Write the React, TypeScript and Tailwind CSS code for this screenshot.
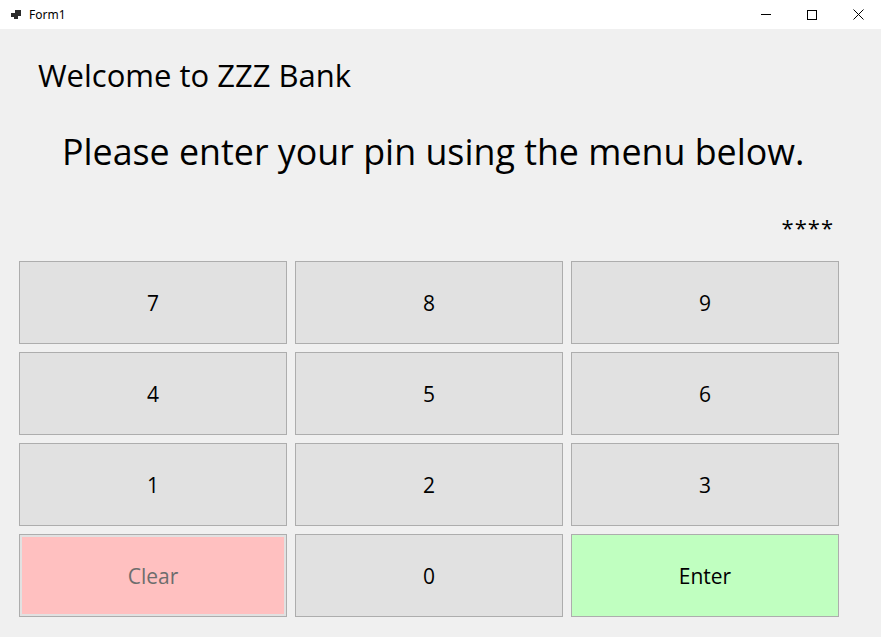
import React from "react";

const F = { fontFamily: '"Open Sans", "Noto Sans", sans-serif' };

function Btn({ label, kind }: { label: string; kind?: "clear" | "enter" }) {
  if (kind === "clear") {
    return (
      <div className="border border-[#adadad] bg-[#e1e1e1] p-[2px] flex">
        <div className="flex-1 bg-[#ffc0c0] flex items-center justify-center pt-[2px] text-[21px] text-[#6d6d6d]">
          {label}
        </div>
      </div>
    );
  }
  return (
    <div
      className={`border border-[#adadad] flex items-center justify-center pt-[2px] text-[21px] text-black ${
        kind === "enter" ? "bg-[#c0ffc0]" : "bg-[#e1e1e1]"
      }`}
    >
      {label}
    </div>
  );
}

export default function App() {
  return (
    <div className="w-[881px] h-[637px] overflow-hidden bg-[#f0f0f0]" style={F}>
      <div className="h-[29px] bg-white flex items-center">
        <svg className="ml-[10px]" width="12" height="12" viewBox="0 0 12 12">
          <rect x="5" y="1" width="6" height="6" fill="#2b2b2b" />
          <rect x="1" y="4" width="4" height="4" fill="#2b2b2b" />
          <rect x="4" y="6" width="4" height="4" fill="#2b2b2b" />
        </svg>
        <span className="ml-[7px] text-[12px] text-black" style={{ fontFamily: '"Noto Sans", sans-serif' }}>Form1</span>
        <div className="ml-auto flex h-full">
          <div className="w-[46px] flex items-center justify-center">
            <div className="w-[10px] h-px bg-black" />
          </div>
          <div className="w-[46px] flex items-center justify-center">
            <div className="w-[10px] h-[10px] border border-black" />
          </div>
          <div className="w-[46px] flex items-center justify-center">
            <svg width="11" height="11" viewBox="0 0 11 11">
              <path d="M0.5 0.5 L10.5 10.5 M10.5 0.5 L0.5 10.5" stroke="#000" strokeWidth="1" />
            </svg>
          </div>
        </div>
      </div>
      <div className="pt-[26px]">
        <div className="ml-[38px] text-[31px] leading-[40px] text-black">Welcome to ZZZ Bank</div>
        <div className="ml-[62px] mt-[32px] text-[35.8px] leading-[48px] text-black">
          Please enter your pin using the menu below.
        </div>
        <div className="mt-[37px] w-[834px] text-right text-[22px] leading-[30px] tracking-[1px] text-black">****</div>
        <div className="ml-[19px] mt-[19px] grid grid-cols-[268px_268px_268px] auto-rows-[83px] gap-x-[8px] gap-y-[8px]">
          <Btn label="7" />
          <Btn label="8" />
          <Btn label="9" />
          <Btn label="4" />
          <Btn label="5" />
          <Btn label="6" />
          <Btn label="1" />
          <Btn label="2" />
          <Btn label="3" />
          <Btn label="Clear" kind="clear" />
          <Btn label="0" />
          <Btn label="Enter" kind="enter" />
        </div>
      </div>
    </div>
  );
}
